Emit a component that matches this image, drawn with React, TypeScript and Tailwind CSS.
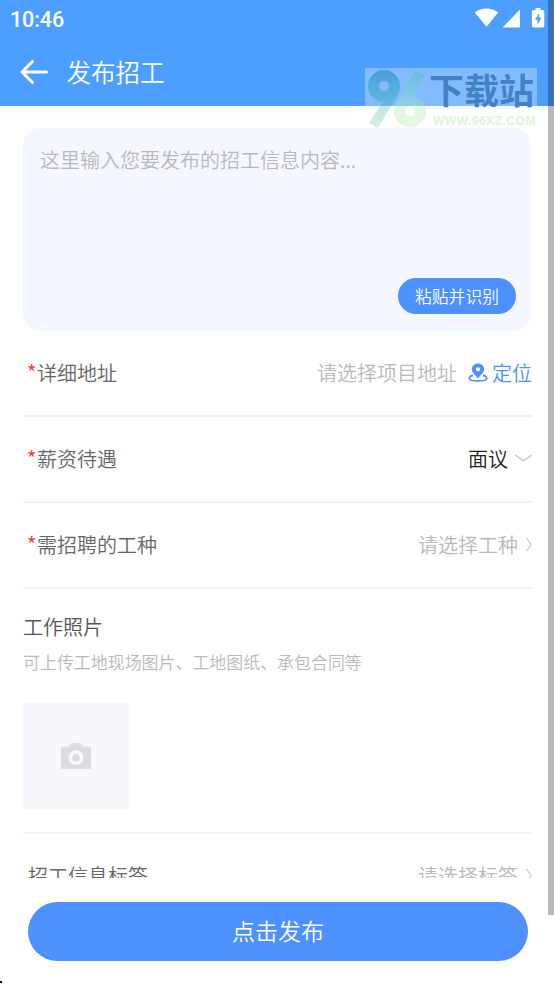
import React from "react";
import clsx from "clsx";

const fields = [
  { label: "详细地址", value: "请选择项目地址", kind: "locate" },
  { label: "薪资待遇", value: "面议", kind: "select" },
  { label: "需招聘的工种", value: "请选择工种", kind: "link" },
];

function StatusIcons() {
  return (
    <svg width="72" height="22" viewBox="0 0 72 22" fill="#fff">
      <path d="M0.8 4.600 C7 -0.900 18 -0.900 24.200 4.600 L12.500 18.800 Z" />
      <path d="M46 1.500 V19.500 H28.600 Z" />
      <path d="M61.500 0 h5 v2 h2.200 q1.600 0 1.600 1.600 v14.200 q0 1.600 -1.600 1.600 h-9.200 q-1.600 0 -1.600 -1.600 V3.600 q0 -1.600 1.600 -1.600 h2 Z" />
      <path d="M65.300 4.800 L61 11.800 H63.600 V17 L67.500 9.600 H65 Z" fill="#4d9fff" />
    </svg>
  );
}

function PinIcon() {
  return (
    <svg width="20" height="20" viewBox="0 0 20 20" fill="none">
      <path
        fillRule="evenodd"
        d="M10 0.500 C6.400 0.500 3.900 3 3.900 6.300 C3.900 9.800 7.600 12.200 10 15.500 C12.400 12.200 16.100 9.800 16.100 6.300 C16.100 3 13.600 0.500 10 0.500 Z M10 4.200 A2.100 2.100 0 1 1 10 8.400 A2.100 2.100 0 1 1 10 4.200 Z"
        fill="#4d90ff"
      />
      <path
        d="M5 12.400 C2.500 13 1.200 14 1.200 15.200 C1.200 17 5 17.900 10 17.900 C15 17.900 18.800 17 18.800 15.200 C18.800 14 17.500 13 15 12.400"
        stroke="#4d90ff"
        strokeWidth="1.600"
      />
    </svg>
  );
}

function ChevronRight() {
  return (
    <svg width="8" height="16" viewBox="0 0 8 16" fill="none" stroke="#c8c8c8" strokeWidth="1.200">
      <path d="M2.300 1 L7.200 7.500 L2.300 14" />
    </svg>
  );
}

function ChevronDown() {
  return (
    <svg width="18" height="10" viewBox="0 0 18 10" fill="none" stroke="#c4c4c4" strokeWidth="1.400">
      <path d="M1.500 1 L9.500 6.800 L17.500 1" />
    </svg>
  );
}

function CameraIcon() {
  return (
    <svg width="30" height="26" viewBox="0 0 30 26">
      <path
        d="M1.500 3.800 H7.500 L9.600 0.800 Q10.200 0 11.200 0 H18.800 Q19.800 0 20.400 0.800 L22.500 3.800 H28.500 Q30 3.800 30 5.300 V24.500 Q30 26 28.500 26 H1.500 Q0 26 0 24.500 V5.300 Q0 3.800 1.500 3.800 Z"
        fill="#dcdddf"
      />
      <circle cx="15" cy="14.700" r="5.600" fill="none" stroke="#f6f8fb" strokeWidth="3.600" />
    </svg>
  );
}

function Watermark() {
  return (
    <div className="absolute left-[365px] top-[68px] flex h-[61px] w-[172px] bg-white/30">
      <svg width="64" height="61" viewBox="0 0 64 61" fill="none" className="shrink-0">
        <defs>
          <linearGradient id="nine" x1="0" y1="0" x2="0" y2="61" gradientUnits="userSpaceOnUse">
            <stop offset="0" stopColor="#459ed8" />
            <stop offset="0.620" stopColor="#66b8e0" />
            <stop offset="0.625" stopColor="#c3e5e2" />
            <stop offset="1" stopColor="#d8efe2" />
          </linearGradient>
          <linearGradient id="six" x1="0" y1="0" x2="0" y2="61" gradientUnits="userSpaceOnUse">
            <stop offset="0" stopColor="#67b9e4" />
            <stop offset="0.620" stopColor="#8fcfe4" />
            <stop offset="0.625" stopColor="#e0f6e0" />
            <stop offset="1" stopColor="#e8f9e2" />
          </linearGradient>
        </defs>
        <path
          fillRule="evenodd"
          d="M19 2 A16 16 0 0 0 3 18 C3 27 10 34 18 34 L4 55 L13 60 L32 28 C34 25 35 22 35 18 A16 16 0 0 0 19 2 Z M19 13 A5 5 0 1 1 19 23 A5 5 0 1 1 19 13 Z"
          fill="url(#nine)"
        />
        <path
          fillRule="evenodd"
          d="M50 2 L60 7 L48 28.500 C55 29 61 36 61 43.500 A16 16 0 0 1 29 43.500 C29 40 30 37 32 34 Z M45 38.500 A5 5 0 1 0 45 48.500 A5 5 0 1 0 45 38.500 Z"
          fill="url(#six)"
        />
      </svg>
      <div className="flex flex-col whitespace-nowrap">
        <span className="mt-[2px] h-[38px] text-[35px] leading-[38px] font-bold text-[#4381c6]">下载站</span>
        <span className="ml-[4px] mt-[6px] font-['Liberation_Sans'] text-[12px] leading-[14px] font-bold tracking-[0.520px] text-[#dff3dc]">
          WWW.96XZ.COM
        </span>
      </div>
    </div>
  );
}

export default function App() {
  return (
    <div className="relative flex h-[984px] w-[554px] flex-col overflow-hidden bg-white font-['Noto_Sans_CJK_SC',sans-serif] text-[20px] font-[350]">
      {/* Header */}
      <header className="h-[106px] shrink-0 bg-[#4d9fff] text-white">
        <div className="flex h-[38px] items-center justify-between pl-[10px] pr-[8px]">
          <span className="pt-[2px] font-[Roboto] text-[21.500px] font-medium tracking-[-0.100px]">10:46</span>
          <StatusIcons />
        </div>
        <div className="flex h-[68px] items-center pl-5">
          <svg width="28" height="24" viewBox="0 0 28 24" fill="none" stroke="#fff" strokeWidth="3" className="mt-[-1px]">
            <path d="M12.500 1.500 L2 12 L12.500 22.500 M2 12 H26.500" strokeLinecap="round" strokeLinejoin="round" />
          </svg>
          <h1 className="ml-[18.500px] text-[24.500px]">发布招工</h1>
        </div>
      </header>

      {/* Form */}
      <main className="h-[772px] shrink-0 overflow-hidden pt-[22px] pl-[23px] pr-[22px]">
        <div className="mr-px flex h-[203px] flex-col items-end justify-between rounded-[18px] bg-[#f4f7ff] px-[15px] pt-[17px] pb-[17px]">
          <p className="w-full pl-[2px] leading-[30px] text-[#b9b9b9]">这里输入您要发布的招工信息内容...</p>
          <button className="h-[36px] w-[118px] rounded-full bg-[#4d90ff] pt-px text-[16.800px] text-white">粘贴并识别</button>
        </div>

        {fields.map((field) => (
          <div key={field.label} className="flex h-[86px] items-center justify-between border-b-2 border-[#f2f2f2] pl-[5px]">
            <span className="flex text-[#666]">
              <span className="w-[9px] font-[Roboto] text-[17px] leading-[24px] font-normal text-[#ff2a20]">*</span>
              {field.label}
            </span>
            <span className="flex items-center">
              <span className={clsx(field.kind === "select" ? "text-[#222]" : "text-[#b9b9b9]")}>{field.value}</span>
              {field.kind === "locate" && (
                <span className="ml-[11px] flex items-center gap-[4px] text-[#4d90ff]">
                  <PinIcon />
                  定位
                </span>
              )}
              {field.kind === "select" && <span className="ml-[6px]"><ChevronDown /></span>}
              {field.kind === "link" && <span className="ml-[6px]"><ChevronRight /></span>}
            </span>
          </div>
        ))}

        <section className="h-[245px] border-b-2 border-[#f2f2f2] pt-[23px]">
          <h2 className="leading-[30px] text-[#555]">工作照片</h2>
          <p className="mt-[7px] text-[16.950px] leading-[25px] text-[#b9b9b9]">可上传工地现场图片、工地图纸、承包合同等</p>
          <div className="mt-[29px] flex size-[106px] items-center justify-center rounded-[2px] bg-[#f6f8fb]">
            <CameraIcon />
          </div>
        </section>

        <div className="flex h-[84px] items-center justify-between pl-[5px]">
          <span className="text-[#666]">招工信息标签</span>
          <span className="flex items-center gap-[6px] text-[#b9b9b9]">
            请选择标签
            <ChevronRight />
          </span>
        </div>
      </main>

      {/* Submit */}
      <footer className="pt-[24px] pl-[28px]">
        <button className="h-[58.500px] w-[500px] rounded-full bg-[#4d90ff] pb-[2px] text-[23px] text-white">点击发布</button>
      </footer>

      <Watermark />
      <div className="absolute top-0 right-0 h-[915px] w-[6px] bg-black/28" />
      <div className="absolute bottom-[1px] left-0 size-[2px] bg-black" />
    </div>
  );
}
